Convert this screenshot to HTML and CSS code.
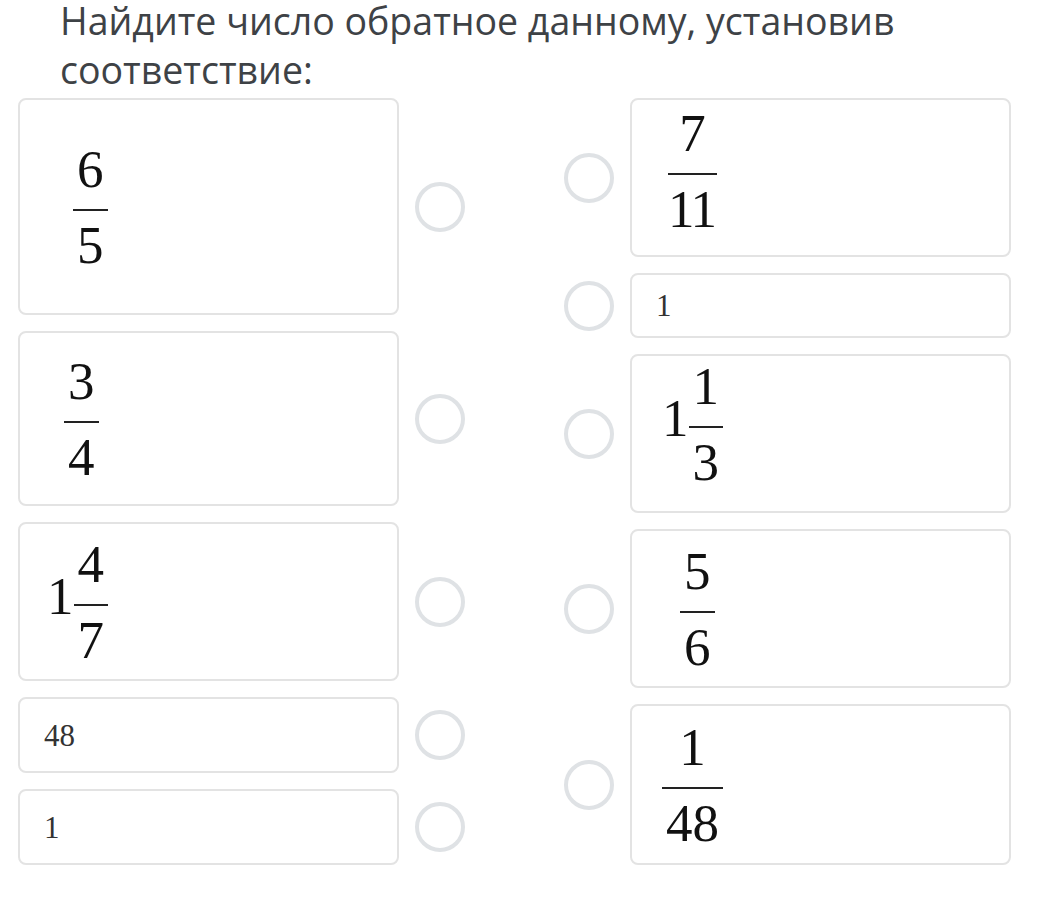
FILE: index.html
```html
<!DOCTYPE html>
<html lang="ru">
<head>
<meta charset="utf-8">
<title>Найдите число обратное данному</title>
<link rel="stylesheet" href="styles.css">
</head>
<body>
<h1 class="title">Найдите число обратное данному, установив соответствие:</h1>
<div class="board">
  <div class="col col-left">
    <div class="row h-217">
      <div class="card"><span class="frac off-29"><span class="num">6</span><span class="den">5</span></span></div>
      <span class="radio"></span>
    </div>
    <div class="row h-175">
      <div class="card"><span class="frac off-20"><span class="num">3</span><span class="den">4</span></span></div>
      <span class="radio"></span>
    </div>
    <div class="row h-159">
      <div class="card"><span class="mixed off-3"><span class="whole">1</span><span class="frac"><span class="num">4</span><span class="den">7</span></span></span></div>
      <span class="radio"></span>
    </div>
    <div class="row h-76">
      <div class="card"><span class="plain">48</span></div>
      <span class="radio"></span>
    </div>
    <div class="row h-76">
      <div class="card"><span class="plain">1</span></div>
      <span class="radio"></span>
    </div>
  </div>
  <div class="col col-right">
    <div class="row h-159">
      <span class="radio"></span>
      <div class="card"><span class="frac off-12 raise-14"><span class="num">7</span><span class="den tight">11</span></span></div>
    </div>
    <div class="row h-65">
      <span class="radio"></span>
      <div class="card"><span class="plain">1</span></div>
    </div>
    <div class="row h-159">
      <span class="radio"></span>
      <div class="card"><span class="mixed off-6 raise-20"><span class="whole">1</span><span class="frac"><span class="num">1</span><span class="den">3</span></span></span></div>
    </div>
    <div class="row h-159">
      <span class="radio"></span>
      <div class="card"><span class="frac off-24"><span class="num">5</span><span class="den">6</span></span></div>
    </div>
    <div class="row h-161">
      <span class="radio"></span>
      <div class="card"><span class="frac off-6"><span class="num">1</span><span class="den">48</span></span></div>
    </div>
  </div>
</div>
</body>
</html>
```

FILE: styles.css
```css
* { box-sizing: border-box; }
html, body { margin: 0; padding: 0; background: #ffffff; }
body { width: 1040px; height: 903px; overflow: hidden; }

.title {
  margin: -4px 0 0 0;
  padding: 0 20px 0 60px;
  font-family: "Open Sans", "Noto Sans", sans-serif;
  font-weight: 400;
  font-size: 37.5px;
  line-height: 49px;
  color: #3e4246;
}

.board {
  display: flex;
  gap: 99px;
  padding-left: 18px;
  margin-top: 4px;
}

.col {
  display: flex;
  flex-direction: column;
  gap: 16px;
}
.col-left { width: 447px; }
.col-right { width: 447px; }

.row {
  display: flex;
  align-items: center;
  gap: 16px;
}
.h-217 { height: 217px; }
.h-175 { height: 175px; }
.h-159 { height: 159px; }
.h-161 { height: 161px; }
.h-76 { height: 76px; }
.h-65 { height: 65px; }

.card {
  width: 381px;
  height: 100%;
  flex: none;
  border: 2px solid #e3e3e3;
  border-radius: 8px;
  background: #fff;
  display: flex;
  align-items: center;
  padding-left: 24px;
}

.radio {
  flex: none;
  width: 50px;
  height: 50px;
  border: 4px solid #dfe2e5;
  border-radius: 50%;
  background: #fff;
}

.plain {
  font-family: "Liberation Serif", "Times New Roman", serif;
  font-size: 31px;
  line-height: 1;
  color: #333;
}

.frac {
  display: inline-flex;
  flex-direction: column;
  align-items: stretch;
  font-family: "Liberation Serif", "Times New Roman", serif;
  font-size: 53px;
  color: #111;
  text-align: center;
}
.num {
  line-height: 40px;
  padding: 0 4px 20px;
  border-bottom: 2px solid #222;
}
.den {
  line-height: 40px;
  margin-top: 14px;
  padding: 0 4px;
}
.tight { letter-spacing: -2px; padding: 0 2px 0 0; }

.mixed {
  display: inline-flex;
  align-items: center;
}
.whole {
  font-family: "Liberation Serif", "Times New Roman", serif;
  font-size: 53px;
  line-height: 40px;
  color: #111;
  margin-bottom: 12px;
}

.off-3 { margin-left: 3px; }
.off-6 { margin-left: 6px; }
.off-12 { margin-left: 12px; }
.off-20 { margin-left: 20px; }
.off-24 { margin-left: 24px; }
.off-29 { margin-left: 29px; }
.raise-14 { margin-bottom: 14px; }
.raise-20 { margin-bottom: 20px; }
```
